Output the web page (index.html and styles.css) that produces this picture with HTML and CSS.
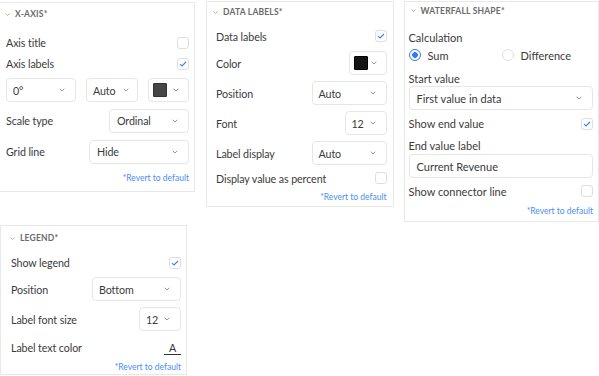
FILE: index.html
```html
<!DOCTYPE html>
<html lang="en">
<head>
    <meta charset="UTF-8">
    <meta name="viewport" content="width=device-width, initial-scale=1.0">
    <title>Chart Settings</title>
    <link rel="stylesheet" href="styles.css">
</head>
<body>
    <div class="board">
        <div class="column-left">
            <!-- X-Axis -->
            <section class="panel panel-xaxis">
                <div class="panel-head">
                    <svg class="head-chevron" width="5" height="3" viewBox="0 0 5 3"><path d="M0.5 0.5 L2.5 2.5 L4.5 0.5" fill="none" stroke="#aaa" stroke-width="0.9"/></svg>
                    <span>X-Axis*</span>
                </div>
                <div class="row row-check first-check">
                    <span>Axis title</span>
                    <span class="check"></span>
                </div>
                <div class="row row-check">
                    <span>Axis labels</span>
                    <span class="check"><svg width="8" height="6" viewBox="0 0 8 6"><path d="M1 3.2 L3 5 L7 1" fill="none" stroke="#3b82f6" stroke-width="1.1"/></svg></span>
                </div>
                <div class="row row-triple">
                    <div class="select sel-angle"><span>0°</span><svg class="chevron" width="6" height="4" viewBox="0 0 6 4"><path d="M0.7 0.8 L3 3 L5.3 0.8" fill="none" stroke="#888" stroke-width="0.9"/></svg></div>
                    <div class="select sel-auto"><span>Auto</span><svg class="chevron" width="6" height="4" viewBox="0 0 6 4"><path d="M0.7 0.8 L3 3 L5.3 0.8" fill="none" stroke="#888" stroke-width="0.9"/></svg></div>
                    <div class="select sel-color"><span class="swatch swatch-gray"></span><svg class="chevron" width="6" height="4" viewBox="0 0 6 4"><path d="M0.7 0.8 L3 3 L5.3 0.8" fill="none" stroke="#888" stroke-width="0.9"/></svg></div>
                </div>
                <div class="row row-select">
                    <span>Scale type</span>
                    <div class="select sel-ordinal"><span>Ordinal</span><svg class="chevron" width="6" height="4" viewBox="0 0 6 4"><path d="M0.7 0.8 L3 3 L5.3 0.8" fill="none" stroke="#888" stroke-width="0.9"/></svg></div>
                </div>
                <div class="row row-select">
                    <span>Grid line</span>
                    <div class="select sel-hide"><span>Hide</span><svg class="chevron" width="6" height="4" viewBox="0 0 6 4"><path d="M0.7 0.8 L3 3 L5.3 0.8" fill="none" stroke="#888" stroke-width="0.9"/></svg></div>
                </div>
                <div class="revert">*Revert to default</div>
            </section>

            <!-- Legend -->
            <section class="panel panel-legend">
                <div class="panel-head">
                    <svg class="head-chevron" width="5" height="3" viewBox="0 0 5 3"><path d="M0.5 0.5 L2.5 2.5 L4.5 0.5" fill="none" stroke="#aaa" stroke-width="0.9"/></svg>
                    <span>Legend*</span>
                </div>
                <div class="row row-check">
                    <span>Show legend</span>
                    <span class="check"><svg width="8" height="6" viewBox="0 0 8 6"><path d="M1 3.2 L3 5 L7 1" fill="none" stroke="#3b82f6" stroke-width="1.1"/></svg></span>
                </div>
                <div class="row row-select pos-row">
                    <span>Position</span>
                    <div class="select sel-bottom"><span>Bottom</span><svg class="chevron" width="6" height="4" viewBox="0 0 6 4"><path d="M0.7 0.8 L3 3 L5.3 0.8" fill="none" stroke="#888" stroke-width="0.9"/></svg></div>
                </div>
                <div class="row row-select">
                    <span>Label font size</span>
                    <div class="select sel-font"><span>12</span><svg class="chevron" width="6" height="4" viewBox="0 0 6 4"><path d="M0.7 0.8 L3 3 L5.3 0.8" fill="none" stroke="#888" stroke-width="0.9"/></svg></div>
                </div>
                <div class="row row-color">
                    <span>Label text color</span>
                    <span class="text-color">A</span>
                </div>
                <div class="revert">*Revert to default</div>
            </section>
        </div>

        <!-- Data labels -->
        <section class="panel panel-labels">
            <div class="panel-head">
                <svg class="head-chevron" width="5" height="3" viewBox="0 0 5 3"><path d="M0.5 0.5 L2.5 2.5 L4.5 0.5" fill="none" stroke="#aaa" stroke-width="0.9"/></svg>
                <span>Data labels*</span>
            </div>
            <div class="row row-check">
                <span>Data labels</span>
                <span class="check"><svg width="8" height="6" viewBox="0 0 8 6"><path d="M1 3.2 L3 5 L7 1" fill="none" stroke="#3b82f6" stroke-width="1.1"/></svg></span>
            </div>
            <div class="row row-select">
                <span>Color</span>
                <div class="select sel-color"><span class="swatch swatch-black"></span><svg class="chevron" width="6" height="4" viewBox="0 0 6 4"><path d="M0.7 0.8 L3 3 L5.3 0.8" fill="none" stroke="#888" stroke-width="0.9"/></svg></div>
            </div>
            <div class="row row-select">
                <span>Position</span>
                <div class="select sel-wide"><span>Auto</span><svg class="chevron" width="6" height="4" viewBox="0 0 6 4"><path d="M0.7 0.8 L3 3 L5.3 0.8" fill="none" stroke="#888" stroke-width="0.9"/></svg></div>
            </div>
            <div class="row row-select">
                <span>Font</span>
                <div class="select sel-font"><span>12</span><svg class="chevron" width="6" height="4" viewBox="0 0 6 4"><path d="M0.7 0.8 L3 3 L5.3 0.8" fill="none" stroke="#888" stroke-width="0.9"/></svg></div>
            </div>
            <div class="row row-select">
                <span>Label display</span>
                <div class="select sel-wide"><span>Auto</span><svg class="chevron" width="6" height="4" viewBox="0 0 6 4"><path d="M0.7 0.8 L3 3 L5.3 0.8" fill="none" stroke="#888" stroke-width="0.9"/></svg></div>
            </div>
            <div class="row row-check last-check">
                <span>Display value as percent</span>
                <span class="check"></span>
            </div>
            <div class="revert">*Revert to default</div>
        </section>

        <!-- Waterfall shape -->
        <section class="panel panel-waterfall">
            <div class="panel-head">
                <svg class="head-chevron" width="5" height="3" viewBox="0 0 5 3"><path d="M0.5 0.5 L2.5 2.5 L4.5 0.5" fill="none" stroke="#aaa" stroke-width="0.9"/></svg>
                <span>Waterfall shape*</span>
            </div>
            <div class="field-label calc-label">Calculation</div>
            <div class="radio-row">
                <label class="radio-option"><span class="radio radio-on"></span>Sum</label>
                <label class="radio-option"><span class="radio"></span>Difference</label>
            </div>
            <div class="field-label start-label">Start value</div>
            <div class="select sel-full"><span>First value in data</span><svg class="chevron" width="6" height="4" viewBox="0 0 6 4"><path d="M0.7 0.8 L3 3 L5.3 0.8" fill="none" stroke="#888" stroke-width="0.9"/></svg></div>
            <div class="row row-end">
                <span>Show end value</span>
                <span class="check"><svg width="8" height="6" viewBox="0 0 8 6"><path d="M1 3.2 L3 5 L7 1" fill="none" stroke="#3b82f6" stroke-width="1.1"/></svg></span>
            </div>
            <div class="field-label end-label">End value label</div>
            <div class="text-input">Current Revenue</div>
            <div class="row row-connector">
                <span>Show connector line</span>
                <span class="check"></span>
            </div>
            <div class="revert">*Revert to default</div>
        </section>
    </div>
</body>
</html>
```

FILE: styles.css
```css
body {
    margin: 0;
    padding: 0;
    background-color: #ffffff;
    font-family: Lato, "Open Sans", sans-serif;
    font-size: 10.7px;
    letter-spacing: -0.1px;
    color: #3b3b3b;
    overflow: hidden;
}

.board {
    display: flex;
    align-items: flex-start;
}

.column-left {
    margin-left: -4px;
    width: 199px;
}

.panel {
    box-sizing: border-box;
    background-color: #fff;
    border: 1px solid #e8e8e8;
    display: flex;
    flex-direction: column;
}

/* panel boxes */
.panel-xaxis {
    margin-top: 2px;
    width: 199px;
    height: 190px;
    padding: 0 5px 0 9px;
}

.panel-legend {
    margin-top: 33px;
    margin-left: 4px;
    width: 187px;
    height: 150px;
    padding: 0 5px 0 10px;
}

.panel-labels {
    margin-top: 1px;
    margin-left: 11px;
    width: 188px;
    height: 206px;
    padding: 0 6px 0 9px;
}

.panel-waterfall {
    margin-top: 1px;
    margin-left: 10px;
    width: 196px;
    height: 221px;
    padding: 0 5px 0 4px;
    font-size: 11px;
    letter-spacing: 0;
}

/* header */
.panel-head {
    display: flex;
    align-items: center;
    gap: 5px;
    font-size: 8.5px;
    font-weight: bold;
    text-transform: uppercase;
    letter-spacing: 0.2px;
    color: #6a6a6a;
    height: 22px;
    margin-left: -1px;
}

.panel-labels .panel-head { height: 20px; margin-left: -3px; }
.panel-waterfall .panel-head { height: 17px; margin-left: 2px; }
.panel-legend .panel-head { height: 24px; }

/* rows */
.row {
    display: flex;
    align-items: center;
    justify-content: space-between;
}

.row-check { height: 21px; }
.row-select { height: 31px; }

.panel-xaxis .first-check { margin-top: 7px; }
.row-triple { height: 30px; margin-top: 1px; }

.panel-labels .row-check { height: 24px; margin-top: 2px; }
.panel-labels .row-select { height: 30px; }
.panel-labels .last-check { height: 20px; margin-top: 0; }

.panel-legend .row-check { height: 25px; }
.panel-legend .pos-row { height: 28px; }
.panel-legend .row-select { margin-bottom: 1px; }
.panel-legend .pos-row + .row-select { height: 30px; }
.row-color { height: 24px; }

/* controls */
.select {
    box-sizing: border-box;
    display: flex;
    align-items: center;
    justify-content: space-between;
    height: 24px;
    padding: 0 10px 0 6px;
    border: 1px solid #e6e6e6;
    border-radius: 4px;
    background-color: #fff;
    color: #3b3b3b;
}

.sel-angle { width: 70px; }
.sel-auto { width: 52px; padding-right: 8px; }
.sel-color { width: 41px; padding-left: 4px; padding-right: 9px; }
.sel-ordinal { width: 80px; padding-left: 7px; }
.sel-hide { width: 100px; padding-left: 7px; }
.panel-labels .sel-color { width: 38px; }
.sel-wide { width: 75px; }
.sel-font { width: 42px; }
.sel-bottom { width: 89px; }
.sel-full { width: 100%; height: 24px; }

.swatch {
    width: 14px;
    height: 14px;
    border-radius: 1px;
    box-sizing: border-box;
}

.swatch-gray { background-color: #464646; border: 1px solid #333; }
.swatch-black { background-color: #141414; border: 1px solid #000; }

.check {
    box-sizing: border-box;
    display: flex;
    align-items: center;
    justify-content: center;
    width: 12px;
    height: 12px;
    border: 1px solid #dedede;
    border-radius: 3px;
    background-color: #fff;
}

.text-color {
    width: 17px;
    text-align: center;
    line-height: 11px;
    padding-bottom: 1px;
    border-bottom: 1.5px solid #333;
    color: #333;
    margin-top: 2px;
}

.revert {
    height: 14px;
    line-height: 14px;
    text-align: right;
    font-size: 8.5px;
    letter-spacing: 0;
    color: #4b8ef5;
}

.panel-xaxis .revert { margin-top: 4px; }
.panel-labels .revert { margin-top: 2px; }
.panel-legend .revert { margin-top: 1px; }

/* waterfall */
.field-label {
    display: flex;
    align-items: center;
}

.calc-label { height: 18px; margin-top: 9px; }
.start-label { height: 16px; margin-top: 6px; }
.end-label { height: 17px; }

.radio-row {
    display: grid;
    grid-template-columns: 93px 1fr;
    height: 18px;
    align-items: center;
}

.radio-option {
    display: flex;
    align-items: center;
    gap: 7px;
}

.radio {
    box-sizing: border-box;
    width: 12px;
    height: 12px;
    border-radius: 50%;
    border: 1px solid #e0e0e0;
    background-color: #fff;
}

.radio-on {
    border: 1.5px solid #2f7cf6;
    background: radial-gradient(circle, #2f7cf6 0 2.6px, #fff 3.1px);
}

.sel-full span { padding-left: 1px; }

.row-end { height: 27px; }
.row-connector { height: 26px; }

.text-input {
    box-sizing: border-box;
    height: 24px;
    display: flex;
    align-items: center;
    padding-left: 7px;
    border: 1px solid #e6e6e6;
    border-radius: 4px;
}
```
